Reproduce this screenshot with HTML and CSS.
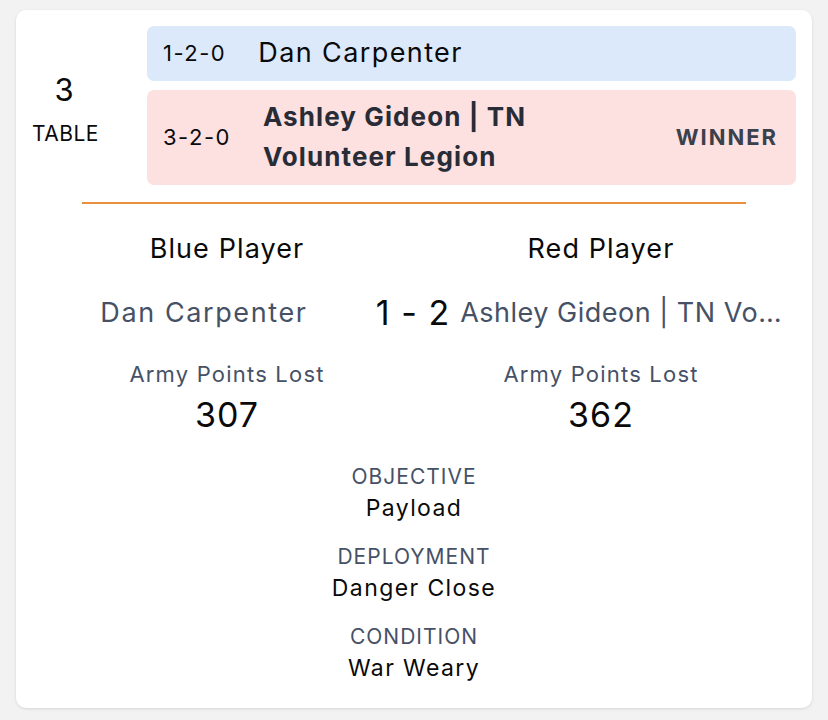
FILE: index.html
```html
<!DOCTYPE html>
<html lang="en">
<head>
    <meta charset="UTF-8">
    <meta name="viewport" content="width=device-width, initial-scale=1.0">
    <title>Match Result</title>
    <link rel="stylesheet" href="styles.css">
</head>
<body>
    <div class="card">
        <div class="pairing">
            <div class="table-num">
                <div class="table-value">3</div>
                <div class="table-label">TABLE</div>
            </div>
            <div class="players">
                <div class="player-row blue">
                    <span class="record">1-2-0</span>
                    <span class="name">Dan Carpenter</span>
                </div>
                <div class="player-row red">
                    <span class="record">3-2-0</span>
                    <span class="name winner-name">Ashley Gideon | TN Volunteer Legion</span>
                    <span class="winner">WINNER</span>
                </div>
            </div>
        </div>

        <hr class="divider">

        <div class="sides">
            <div class="side-title">Blue Player</div>
            <div class="side-title">Red Player</div>
        </div>

        <div class="score-row">
            <div class="score-name">Dan Carpenter</div>
            <div class="score">1 - 2</div>
            <div class="score-name right">Ashley Gideon | TN Volunteer Legion</div>
        </div>

        <div class="sides">
            <div class="points">
                <div class="points-label">Army Points Lost</div>
                <div class="points-value">307</div>
            </div>
            <div class="points">
                <div class="points-label">Army Points Lost</div>
                <div class="points-value">362</div>
            </div>
        </div>

        <div class="mission">
            <div class="mission-item">
                <div class="mission-label">OBJECTIVE</div>
                <div class="mission-value">Payload</div>
            </div>
            <div class="mission-item">
                <div class="mission-label">DEPLOYMENT</div>
                <div class="mission-value">Danger Close</div>
            </div>
            <div class="mission-item">
                <div class="mission-label">CONDITION</div>
                <div class="mission-value">War Weary</div>
            </div>
        </div>
    </div>
</body>
</html>
```

FILE: styles.css
```css
* {
    margin: 0;
    padding: 0;
    box-sizing: border-box;
}
body {
    font-family: 'Inter', 'Open Sans', sans-serif;
    background: #f2f2f2;
    padding: 10px 16px;
    color: #0a0a0a;
}
.card {
    background: #fff;
    border-radius: 10px;
    box-shadow: 0 1px 3px rgba(0, 0, 0, 0.12);
    padding: 16px 16px 24px;
}
.pairing {
    display: flex;
    align-items: center;
}
.table-num {
    width: 64px;
    padding-top: 12px;
    text-align: center;
    flex-shrink: 0;
}
.table-value {
    font-size: 31px;
    line-height: 44px;
}
.table-label {
    font-size: 21px;
    letter-spacing: 0.5px;
    line-height: 44px;
}
.players {
    flex: 1;
    margin-left: 51px;
    display: flex;
    flex-direction: column;
    gap: 9px;
}
.player-row {
    display: flex;
    align-items: center;
    border-radius: 7px;
    padding: 7px 18px 8px 16px;
}
.player-row.blue {
    background: #dbe9fb;
}
.player-row.red {
    background: #fde0e0;
}
.record {
    font-size: 22px;
    letter-spacing: 1.5px;
    margin-right: 32px;
    flex-shrink: 0;
}
.name {
    font-size: 27px;
    letter-spacing: 1.4px;
    line-height: 40px;
}
.winner-name {
    flex: 1;
    font-size: 26px;
    letter-spacing: 1.1px;
    font-weight: 700;
    color: #272c37;
    padding-right: 40px;
}
.winner {
    font-size: 22px;
    font-weight: 700;
    letter-spacing: 2px;
    color: #3a404c;
}
.divider {
    border: none;
    border-top: 2px solid #e8913a;
    margin: 17px 50px 0;
}
.sides {
    display: flex;
    padding: 0 8px;
}
.sides > * {
    flex: 1;
    text-align: center;
}
.side-title {
    font-size: 27px;
    letter-spacing: 1.1px;
    line-height: 40px;
    margin-top: 25px;
}
.score-row {
    display: flex;
    align-items: center;
    padding: 0 8px;
    margin-top: 24px;
}
.score-name {
    flex: 1;
    min-width: 0;
    text-align: center;
    font-size: 27px;
    letter-spacing: 1.6px;
    line-height: 40px;
    color: #465166;
    white-space: nowrap;
    overflow: hidden;
    text-overflow: ellipsis;
}
.score-name.right {
    text-align: left;
    letter-spacing: 0.5px;
}
.score {
    font-size: 34px;
    letter-spacing: 1px;
    line-height: 40px;
    margin: 0 10px 0 8px;
}
.points {
    margin-top: 25px;
}
.points-label {
    font-size: 22px;
    letter-spacing: 1.2px;
    line-height: 32px;
    color: #465166;
}
.points-value {
    font-size: 34px;
    letter-spacing: 1px;
    line-height: 50px;
}
.mission {
    margin-top: 21px;
    text-align: center;
}
.mission-item + .mission-item {
    margin-top: 17px;
}
.mission-label {
    font-size: 21px;
    letter-spacing: 1px;
    line-height: 32px;
    color: #465166;
}
.mission-value {
    font-size: 23px;
    letter-spacing: 1.4px;
    line-height: 31px;
}
```
